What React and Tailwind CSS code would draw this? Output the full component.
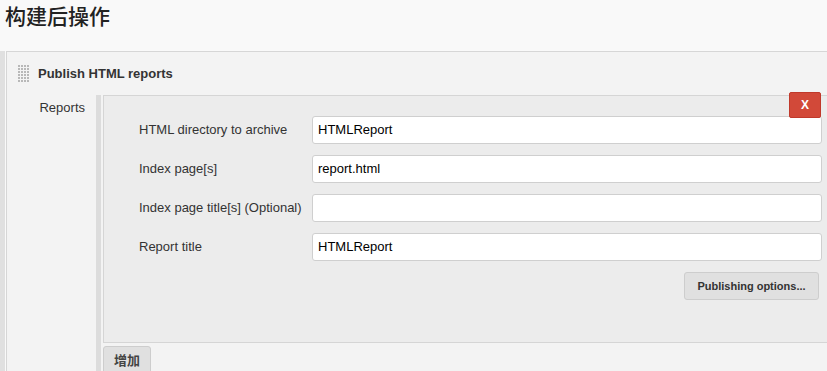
import React from 'react';

const rows = [
  { label: 'HTML directory to archive', value: 'HTMLReport' },
  { label: 'Index page[s]', value: 'report.html' },
  { label: 'Index page title[s] (Optional)', value: '' },
  { label: 'Report title', value: 'HTMLReport' },
];

function Grip() {
  const dots = [];
  for (let r = 0; r < 6; r++) {
    for (let c = 0; c < 4; c++) {
      dots.push(<rect key={r + '-' + c} x={c * 3} y={r * 3} width="2" height="2" fill="#b8b8b8" />);
    }
  }
  return (
    <svg width="12" height="18" viewBox="0 0 12 18" className="block">
      {dots}
    </svg>
  );
}

export default function App() {
  return (
    <div className="w-[827px] h-[371px] overflow-hidden bg-[#f9f9f9] text-[#333] font-['Liberation_Sans','Noto_Sans_CJK_SC',sans-serif] flex flex-col">
      <div className="h-[51px] shrink-0 pl-[5px] pt-[1px]">
        <h1 className="text-[21px] leading-[28px] font-medium text-[#222] font-['Noto_Sans_CJK_SC',sans-serif]">构建后操作</h1>
      </div>

      <div className="flex flex-1 min-h-0">
        <div className="w-[5px] bg-[#e0e0e0] shrink-0" />
        <div className="ml-[1px] flex-1 border-l border-t border-[#d6d6d6] bg-[#f3f3f3] flex flex-col">
          <div className="h-[43px] shrink-0 flex items-center gap-[8px] pl-[11px] pt-[1px]">
            <Grip />
            <span className="text-[13px] font-bold text-[#333]">Publish HTML reports</span>
          </div>

          <div className="flex flex-1">
            <div className="w-[89px] shrink-0 text-right pr-[11px] pt-[5px] text-[13px] leading-[16px]">Reports</div>
            <div className="w-[5px] shrink-0 bg-[#dcdcdc]" />
            <div className="ml-[2px] flex-1 flex flex-col">
              <div className="relative h-[248px] shrink-0 border-l border-t border-b border-[#d5d5d5] bg-[#ececec] pt-[20px] pl-[35px] pr-[5px]">
                <button className="absolute top-[-4px] right-[6px] w-[32px] h-[26px] bg-[#d24939] text-white text-[12px] font-bold rounded-[2px] border border-[#c0392b]">
                  X
                </button>
                <div className="flex flex-col gap-[11px]">
                  {rows.map((r) => (
                    <div key={r.label} className="flex items-center h-[28px]">
                      <div className="w-[173px] shrink-0 text-[13px] text-[#333]">{r.label}</div>
                      <div className="flex-1 h-[28px] bg-white border border-[#cfcfcf] rounded-[3px] pl-[5px] flex items-center text-[13px] text-black">
                        {r.value}
                      </div>
                    </div>
                  ))}
                </div>
                <div className="flex justify-end mt-[11px] pr-[3px]">
                  <button className="w-[135px] h-[28px] bg-[#e0e0e0] border border-[#cdcdcd] rounded-[3px] text-[11px] font-bold text-[#333]">
                    Publishing options...
                  </button>
                </div>
              </div>
              <div className="pt-[3px]">
                <button className="w-[48px] h-[30px] bg-[#e0e0e0] border border-[#cdcdcd] rounded-t-[3px] text-[13px] font-bold text-[#444] font-['Noto_Sans_CJK_SC',sans-serif] leading-[16px] flex items-start justify-center pt-[5px]">
                  增加
                </button>
              </div>
            </div>
          </div>
        </div>
      </div>
    </div>
  );
}
